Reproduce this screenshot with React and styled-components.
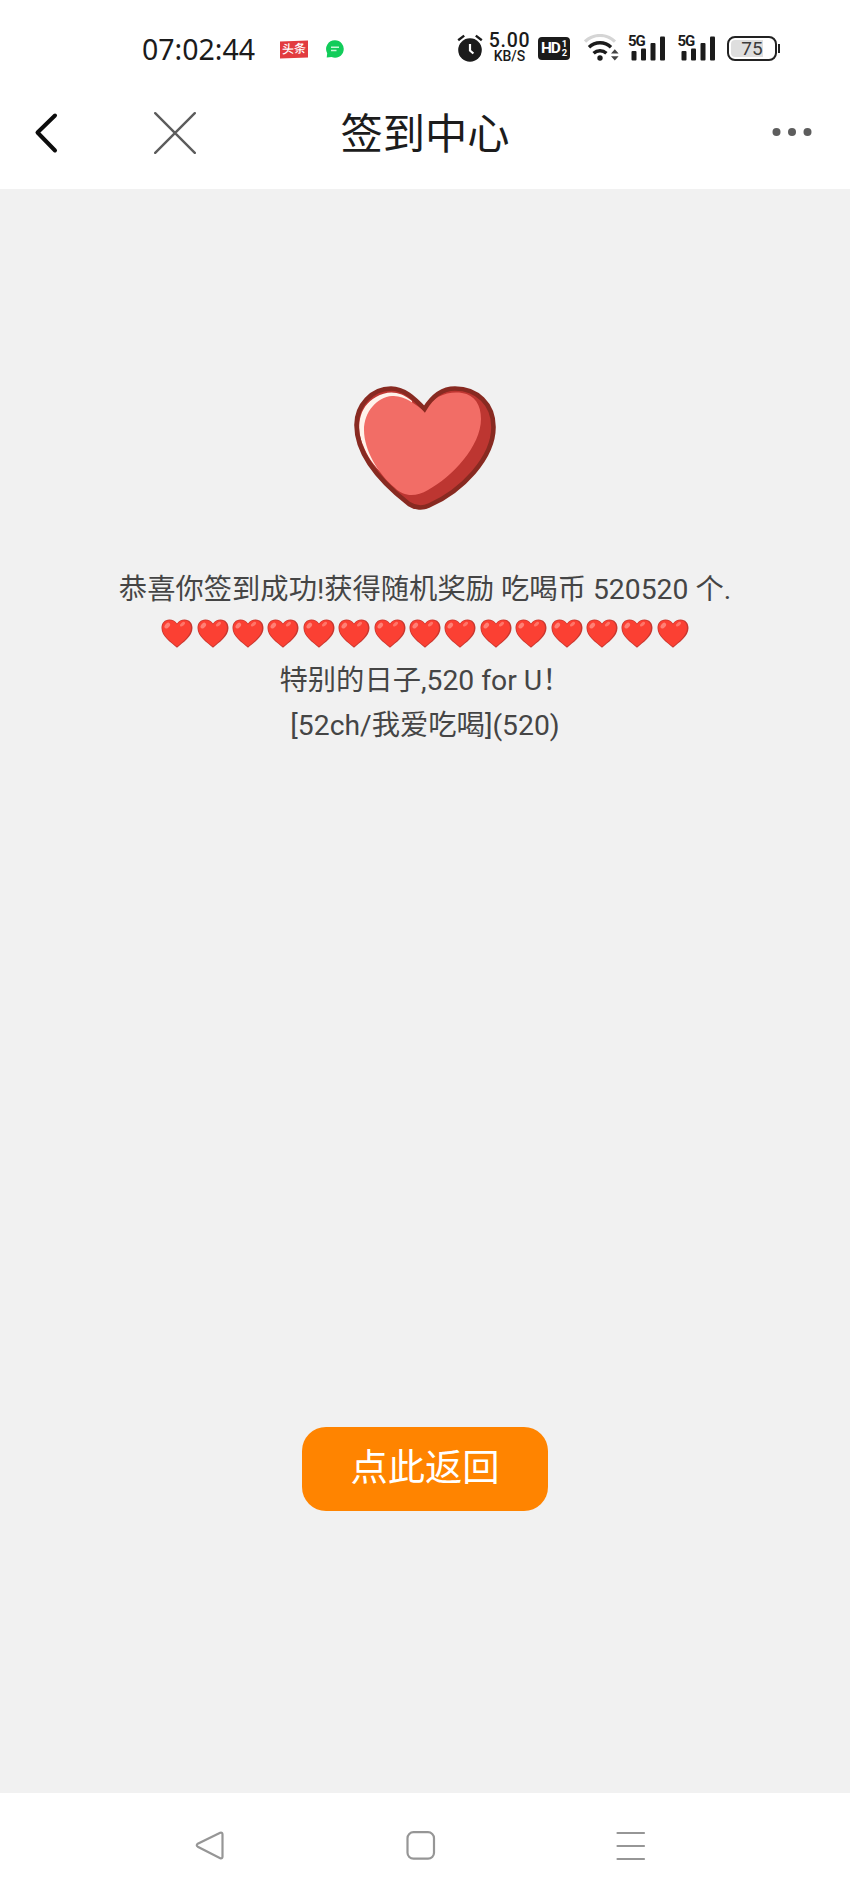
import React from "react";
import styled, { createGlobalStyle } from "styled-components";

const HEART_COUNT = 15;

export default function App() {
  return (
    <>
      <GlobalStyle />
      <Screen>
        <StatusBar />
        <NavBar />
        <Content>
          <BigHeart />
          <Message>
            <p>恭喜你签到成功!获得随机奖励 吃喝币 520520 个.</p>
            <div className="hearts">
              {Array.from({ length: HEART_COUNT }, (_, i) => (
                <SmallHeart key={i} />
              ))}
            </div>
            <p>特别的日子,520 for U！</p>
            <p>[52ch/我爱吃喝](520)</p>
          </Message>
          <ReturnButton>点此返回</ReturnButton>
        </Content>
        <SystemBar />
      </Screen>
    </>
  );
}

function StatusBar() {
  return (
    <StatusContainer>
      <div className="left">
        <Time>07:02:44</Time>
        <NewsBadge>头条</NewsBadge>
        <svg width="18" height="18" viewBox="0 0 18 18">
          <path d="M9 .3a8.7 8.7 0 1 1-3.4 16.7L.7 17.5l.5-4.3A8.7 8.7 0 0 1 9 .3Z" fill="#12cc5a" />
          <path d="M5 7.3h8M5 10.5h5.5" stroke="#c9f7d8" strokeWidth="1.4" />
        </svg>
      </div>
      <div className="right">
        <svg width="26" height="28" viewBox="0 0 26 28">
          <circle cx="13" cy="16" r="11.8" fill="#1b1b1b" />
          <path d="M1.2 6.2 7.2 1.6M24.8 6.2l-6-4.6" stroke="#1b1b1b" strokeWidth="2.4" />
          <path d="M13 10v6.5l3.4 3" stroke="#fff" strokeWidth="2.2" fill="none" />
        </svg>
        <Speed>
          <b>5.00</b>
          <span>KB/S</span>
        </Speed>
        <HdBadge>
          HD
          <span>
            <i>1</i>
            <i>2</i>
          </span>
        </HdBadge>
        <WifiIcon />
        <Signal />
        <Signal />
        <Battery>
          <div className="level">75</div>
        </Battery>
      </div>
    </StatusContainer>
  );
}

function WifiIcon() {
  return (
    <svg className="wifi" width="36" height="28" viewBox="0 0 36 28" fill="none">
      <path d="M1 7.6a21.5 21.5 0 0 1 30 0" stroke="#d5d5d5" strokeWidth="3.2" />
      <path d="M5 13.2a15.8 15.8 0 0 1 22 0" stroke="#1b1b1b" strokeWidth="3.4" />
      <path d="M9.6 19.2a9.4 9.4 0 0 1 12.8 0" stroke="#1b1b1b" strokeWidth="3.4" />
      <circle cx="16" cy="24" r="2.7" fill="#1b1b1b" />
      <path d="M27 19.4l3.8-4.2 3.8 4.2ZM27 22.2l3.8 4.2 3.8-4.2Z" fill="#444" />
    </svg>
  );
}

function Signal() {
  return (
    <SignalBox>
      <span>5G</span>
      <svg width="38" height="28" viewBox="0 0 38 28" fill="#1b1b1b">
        <rect x="3.5" y="17" width="5" height="9.5" rx="1" />
        <rect x="13" y="14.5" width="5" height="12" rx="1" />
        <rect x="22.5" y="9" width="5" height="17.5" rx="1" />
        <rect x="32" y="2.5" width="5" height="24" rx="1" />
      </svg>
    </SignalBox>
  );
}

function NavBar() {
  return (
    <NavContainer>
      <div className="actions">
        <svg width="24" height="42" viewBox="0 0 24 42" fill="none">
          <path d="M21 3.5 3.5 20.5 21 38.5" stroke="#0c0c0c" strokeWidth="4" strokeLinecap="round" strokeLinejoin="round" />
        </svg>
        <svg width="42" height="42" viewBox="0 0 42 42">
          <path d="M1.2 1.2l39.6 39.6M40.8 1.2 1.2 40.8" stroke="#5c5c5c" strokeWidth="2.4" strokeLinecap="round" />
        </svg>
      </div>
      <h1>签到中心</h1>
      <div className="more">
        <svg width="40" height="10" viewBox="0 0 40 10" fill="#5d5d5d">
          <circle cx="4.5" cy="5" r="4" />
          <circle cx="20" cy="5" r="4" />
          <circle cx="35.5" cy="5" r="4" />
        </svg>
      </div>
    </NavContainer>
  );
}

function BigHeart() {
  return (
    <svg width="142" height="124" viewBox="0 0 142 124">
      <defs>
        <clipPath id="heart">
          <path d="M70.500 23C79 9 89 2.500 101 2.500C123 2.500 139.500 18 139.500 41C139.500 72 108 105 75 119.500C69 122.500 61 122 55 118C28 97 2.500 69 2.500 39C2.500 19 18 2.500 37 2.500C50 2.500 60 12 70.500 23Z" />
        </clipPath>
      </defs>
      <g clipPath="url(#heart)">
        <path d="M0 0h142v124H0z" fill="#bd3631" />
        <path d="M58 15C46 5 34 4 22 11C4 21 2 42 9 59C13 70 20 80 29 88L60 60Z" fill="#fff2ea" />
        <path d="M70.500 25C79 10 94 5 108 7C121 9 127 19 127 33C127 60 98 91 74 104C62 111 50 111 41 102C24 88 10 64 10 44C10 26 23 11 38 10C50 9 61 18 70.500 25Z" fill="#f26d66" />
      </g>
      <path
        d="M70.500 23C79 9 89 2.500 101 2.500C123 2.500 139.500 18 139.500 41C139.500 72 108 105 75 119.500C69 122.500 61 122 55 118C28 97 2.500 69 2.500 39C2.500 19 18 2.500 37 2.500C50 2.500 60 12 70.500 23Z"
        fill="none"
        stroke="#882a21"
        strokeWidth="4.600"
      />
    </svg>
  );
}

function SmallHeart() {
  return (
    <svg width="32" height="29" viewBox="0 0 32 29">
      <path d="M16 4.600C17.800 1.800 20.500.5 23.600.5C28.300.5 31.500 4 31.500 9C31.500 17.500 22 23.500 16 28.700C10 23.500.5 17.500.5 9C.5 4 3.700.5 8.400.5C11.500.5 14.200 1.800 16 4.600Z" fill="#c9372f" />
      <path d="M16 5.600C18 2.600 20.200 1.300 23 1.300C27.300 1.300 30 4.500 30 9C30 16.500 21.800 22.500 16 27.600C10.200 22.500 1.300 17 1.300 9C1.300 4.500 4.200 1.300 8.400 1.300C11.500 1.300 14 2.600 16 5.600Z" fill="#fb4033" />
      <ellipse cx="6.300" cy="6.600" rx="3.300" ry="2.200" fill="#ff8075" transform="rotate(-48 6.300 6.600)" />
      <ellipse cx="21.500" cy="5.200" rx="3" ry="1.600" fill="#ff7568" transform="rotate(-38 21.500 5.200)" />
    </svg>
  );
}

function SystemBar() {
  return (
    <SystemContainer>
      <svg width="30" height="30" viewBox="0 0 30 30">
        <path d="M25.200 1.700 2.800 12.700Q.7 14.200 2.800 15.700L25.200 27.300Q27.500 28 27.500 25.500V3.500Q27.500 1 25.200 1.700Z" />
      </svg>
      <svg width="30" height="30" viewBox="0 0 30 30">
        <rect x="1.500" y="1.200" width="26.500" height="26.500" rx="6" />
      </svg>
      <svg width="30" height="30" viewBox="0 0 30 30">
        <path d="M1.500 2h26.500M1.500 15h26.500M1.500 28h26.500" />
      </svg>
    </SystemContainer>
  );
}

const GlobalStyle = createGlobalStyle`
  * {
    box-sizing: border-box;
  }
  body {
    margin: 0;
    background: #fff;
    font-family: Roboto, "Noto Sans CJK SC", sans-serif;
  }
  svg {
    display: block;
    flex-shrink: 0;
  }
  h1,
  p {
    margin: 0;
    font-weight: 400;
  }
`;

const Screen = styled.div`
  width: 850px;
  height: 1898px;
  display: flex;
  flex-direction: column;
  overflow: hidden;
`;

const StatusContainer = styled.div`
  height: 78px;
  padding: 18px 71px 0 142px;
  display: flex;
  justify-content: space-between;
  color: #1b1b1b;
  .left,
  .right {
    height: 60px;
    display: flex;
    align-items: center;
  }
  .left {
    padding-top: 2px;
  }
  .left svg {
    margin-left: 18px;
  }
  .wifi {
    margin: 0 8px 0 14px;
  }
`;

const Time = styled.div`
  width: 115px;
  font-family: "Noto Sans", sans-serif;
  font-size: 28.500px;
  line-height: 60px;
  white-space: nowrap;
`;

const NewsBadge = styled.div`
  width: 28px;
  height: 17px;
  margin-left: 23px;
  background: #e23b3f;
  color: #fff;
  font-size: 12px;
  font-weight: 500;
  line-height: 16px;
  text-align: center;
  transform: skewY(-2deg);
`;

const Speed = styled.div`
  width: 43px;
  margin-left: 5px;
  display: flex;
  flex-direction: column;
  align-items: center;
  b {
    font-size: 19.500px;
    font-weight: 500;
    line-height: 16px;
    letter-spacing: 0.700px;
  }
  span {
    font-size: 14px;
    font-weight: 500;
    line-height: 14px;
  }
`;

const HdBadge = styled.div`
  width: 32px;
  height: 23px;
  margin-left: 7px;
  padding-left: 3px;
  display: flex;
  align-items: center;
  border-radius: 4px;
  background: #1b1b1b;
  color: #fff;
  font: 700 15.500px/23px Roboto, sans-serif;
  letter-spacing: -1.200px;
  span {
    display: flex;
    flex-direction: column;
    margin-left: 2px;
  }
  i {
    font-size: 9.500px;
    font-style: normal;
    line-height: 9px;
  }
`;

const SignalBox = styled.div`
  position: relative;
  width: 38px;
  margin-right: 11.500px;
  span {
    position: absolute;
    top: 0;
    left: 0;
    font-size: 15px;
    font-weight: 700;
    line-height: 15px;
    letter-spacing: -1px;
  }
`;

const Battery = styled.div`
  width: 50px;
  height: 25px;
  padding: 2px;
  margin-right: 2px;
  position: relative;
  border: 2px solid #222;
  border-radius: 8px;
  .level {
    height: 100%;
    border-radius: 4px;
    background: linear-gradient(90deg, #dedede 75%, #fff 75%);
    color: #3c3c3c;
    font-size: 19px;
    line-height: 18px;
    text-align: center;
  }
  &::after {
    content: "";
    position: absolute;
    top: 6px;
    right: -5px;
    width: 2px;
    height: 9px;
    background: #222;
  }
`;

const NavContainer = styled.header`
  height: 111px;
  padding: 0 38px 0 34px;
  display: grid;
  grid-template-columns: 249px 1fr 249px;
  align-items: center;
  .actions {
    display: flex;
    gap: 96px;
    padding-bottom: 2px;
  }
  h1 {
    padding: 3px 0 0 4px;
    color: #1c1c1c;
    font-size: 42.300px;
    line-height: 60px;
    text-align: center;
  }
  .more {
    display: flex;
    justify-content: flex-end;
    padding-bottom: 3px;
  }
`;

const Content = styled.main`
  height: 1604px;
  padding-top: 197px;
  display: flex;
  flex-direction: column;
  align-items: center;
  background: #f1f1f1;
`;

const Message = styled.div`
  margin-top: 57px;
  color: #454545;
  font-size: 28.300px;
  line-height: 45.300px;
  text-align: center;
  white-space: nowrap;
  .hearts {
    height: 45.300px;
    padding-bottom: 2px;
    display: flex;
    align-items: center;
    justify-content: center;
    gap: 3.400px;
  }
`;

const ReturnButton = styled.button`
  width: 246px;
  height: 84px;
  margin-top: 679px;
  padding: 0 0 8px;
  border: none;
  border-radius: 24px;
  background: #ff8400;
  color: #fff;
  font-family: inherit;
  font-size: 37.300px;
`;

const SystemContainer = styled.footer`
  height: 105px;
  padding: 0 204px 0 195px;
  display: flex;
  align-items: center;
  justify-content: space-between;
  background: #fff;
  svg {
    fill: none;
    stroke: #969696;
    stroke-width: 2.200;
    stroke-linecap: round;
  }
`;
